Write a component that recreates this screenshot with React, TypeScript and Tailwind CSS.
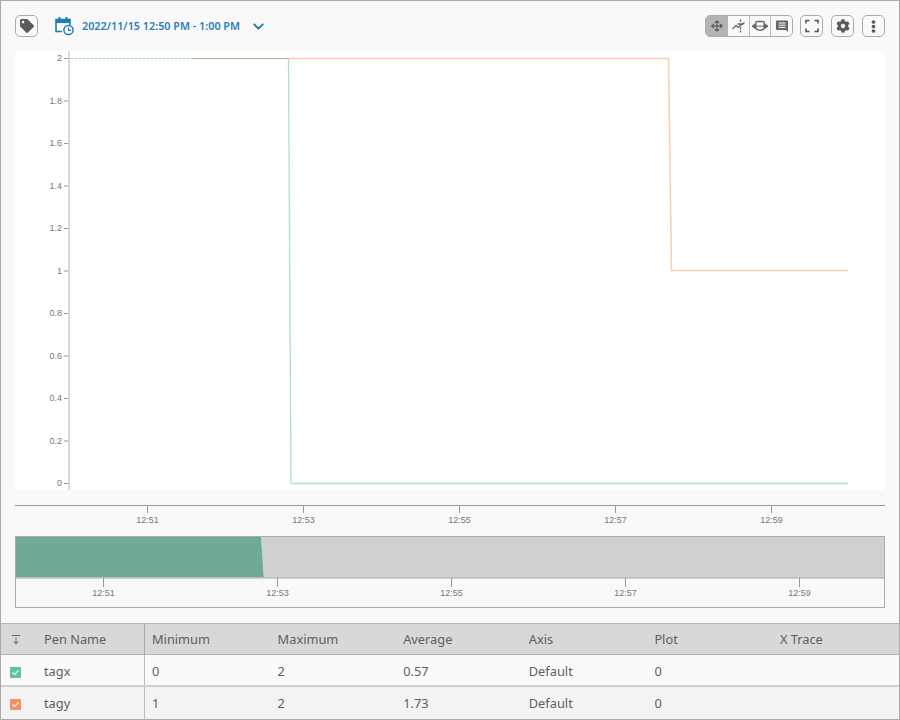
import { ChevronDown } from 'lucide-react'
import { FaArrowsAlt, FaCog, FaEllipsisV, FaTag } from 'react-icons/fa'

const yTicks = [2, 1.8, 1.6, 1.4, 1.2, 1, 0.8, 0.6, 0.4, 0.2, 0]
const columns = ['Minimum', 'Maximum', 'Average', 'Axis', 'Plot', 'X Trace']

const rows = [
  {
    name: 'tagx',
    color: 'bg-[#5fc2a0]',
    row: 'h-[32px] bg-[#fafafa] border-b-2 border-[#d0d0d0]',
    cell: 'pt-1',
    values: ['0', '2', '0.57', 'Default', '0', ''],
  },
  {
    name: 'tagy',
    color: 'bg-[#fb8d63]',
    row: 'h-[33px] bg-[#f3f3f3] border-b border-[#aaa]',
    cell: 'pt-0.5',
    values: ['1', '2', '1.73', 'Default', '0', ''],
  },
]

function MainChart() {
  return (
    <svg width="870" height="439" className="block">
      {yTicks.map((t, i) => {
        const y = 7.5 + i * 42.5
        return (
          <g key={t}>
            <line x1="49" x2="54" y1={y} y2={y} stroke="#999" />
            <text x="47" y={y + 2.8} textAnchor="end" fontSize="9" fill="#777" fontFamily="Liberation Sans, sans-serif">
              {t}
            </text>
          </g>
        )
      })}
      <line x1="54" x2="54" y1="0" y2="439" stroke="#ccc" strokeWidth="1.5" />
      <path d="M55 7.5H273" fill="none" stroke="#5fc2a0" strokeOpacity="0.6" strokeWidth="1" strokeDasharray="3 1" />
      <path d="M273.5 7.5L276 432.5H833" fill="none" stroke="#5fc2a0" strokeOpacity="0.5" strokeWidth="1.3" />
      <path d="M273 7.5H653.5L656.5 219.5H833" fill="none" stroke="#fb8d63" strokeOpacity="0.45" strokeWidth="1.5" />
      <path d="M177 7.5H273" fill="none" stroke="#c98a58" strokeOpacity="0.65" strokeWidth="1.2" />
    </svg>
  )
}

function TimeAxis() {
  return (
    <svg width="870" height="24" className="block">
      <line x1="0" x2="870" y1="0.5" y2="0.5" stroke="#999" />
      {['12:51', '12:53', '12:55', '12:57', '12:59'].map((t, i) => {
        const x = 132.5 + i * 156
        return (
          <g key={t}>
            <line x1={x} x2={x} y1="0" y2="8" stroke="#999" />
            <text x={x} y="18" textAnchor="middle" fontSize="9" fill="#777" fontFamily="Liberation Sans, sans-serif">
              {t}
            </text>
          </g>
        )
      })}
    </svg>
  )
}

function Navigator() {
  return (
    <div className="h-[72px] border border-[#aaa]">
      <svg width="868" height="70" className="block">
        <rect width="868" height="41" fill="#d0d0d0" />
        <polygon points="0,0 245,0 247.5,40 0,40" fill="#6faa96" />
        <line x1="0" x2="868" y1="41" y2="41" stroke="#aaa" />
        {['12:51', '12:53', '12:55', '12:57', '12:59'].map((t, i) => {
          const x = 87.5 + i * 174
          return (
            <g key={t}>
              <line x1={x} x2={x} y1="41" y2="50" stroke="#999" />
              <text x={x} y="59" textAnchor="middle" fontSize="9" fill="#777" fontFamily="Liberation Sans, sans-serif">
                {t}
              </text>
            </g>
          )
        })}
      </svg>
    </div>
  )
}

function CalendarClock() {
  return (
    <svg width="19" height="20" viewBox="0 0 19 20" className="text-[#1b7eb5]">
      <path d="M7 15.5H1V3.5h14v5.5" fill="none" stroke="currentColor" strokeWidth="1.6" />
      <rect x="1" y="3" width="14" height="4" fill="currentColor" />
      <rect x="3.5" y="1" width="2" height="3.5" fill="currentColor" />
      <rect x="10.5" y="1" width="2" height="3.5" fill="currentColor" />
      <circle cx="13.5" cy="14" r="4.6" fill="#f9f9f9" stroke="currentColor" strokeWidth="1.5" />
      <path d="M13.5 11.5V14.3H16" fill="none" stroke="currentColor" strokeWidth="1.2" />
    </svg>
  )
}

export default function App() {
  return (
    <div className="w-[900px] h-[720px] overflow-hidden border border-[#aaa] border-b-0 bg-[#f9f9f9] font-['Noto_Sans',sans-serif]">
      <div className="h-[50px] px-[14px] pt-[14px] flex items-start">
        <button className="w-[23px] h-[22px] rounded-[5px] border border-[#aaa] flex items-center justify-center text-[#5a5a5a]">
          <FaTag size={14} />
        </button>
        <div className="ml-[17px] flex items-center h-[22px]">
          <CalendarClock />
          <span className="ml-[8px] text-[10.8px] font-semibold text-[#2a80b5]">2022/11/15 12:50 PM - 1:00 PM</span>
          <ChevronDown size={17} strokeWidth={2.5} className="ml-[10px] text-[#1b75ab]" />
        </div>
        <div className="ml-auto flex items-center gap-2">
          <div className="h-[22px] -mr-px flex rounded-[5px] border border-[#aaa] overflow-hidden text-[#666]">
            <div className="w-[22px] bg-[#b3b3b3] flex items-center justify-center">
              <FaArrowsAlt size={12} />
            </div>
            <div className="w-[22px] border-r border-[#bbb] flex items-center justify-center">
              <svg width="16" height="16" viewBox="0 0 16 16">
                <path d="M1.5 11L5 7.5 7 9.5 13.5 4.5" fill="none" stroke="#666" strokeWidth="1.3" />
                <path d="M9.5 1.5V14.5M6.5 6H12.5" fill="none" stroke="#666" strokeWidth="1.3" strokeDasharray="2.5 1.2" />
              </svg>
            </div>
            <div className="w-[21px] border-r border-[#bbb] flex items-center justify-center">
              <svg width="18" height="18" viewBox="0 0 18 18">
                <path d="M4.5 7V6.5A2 2 0 0 1 6.5 4.5H11.5A2 2 0 0 1 13.5 6.5V7M5 11.5A5 4.5 0 0 0 13 11.5" fill="none" stroke="#666" strokeWidth="1.3" />
                <path d="M1 9.2H17M1 9.2L5 6.5V12ZM17 9.2L13 6.5V12Z" fill="#666" stroke="#666" strokeWidth="1" />
              </svg>
            </div>
            <div className="w-[21px] flex items-center justify-center">
              <svg width="14" height="14" viewBox="0 0 14 14">
                <path d="M1 2.5A1 1 0 0 1 2 1.5H12A1 1 0 0 1 13 2.5V12.8L10.5 11H2A1 1 0 0 1 1 10Z" fill="#666" />
                <path d="M3.5 4H10.5M3.5 6.2H10.5M3.5 8.4H10.5" stroke="#fff" strokeWidth="1" />
              </svg>
            </div>
          </div>
          <button className="w-[23px] h-[22px] rounded-[5px] border border-[#aaa] flex items-center justify-center">
            <svg width="14" height="14" viewBox="0 0 14 14">
              <path d="M1 4.5V1.5H4.5M9.5 1.5H13V4.5M13 9.5V12.5H9.5M4.5 12.5H1V9.5" fill="none" stroke="#555" strokeWidth="1.6" />
            </svg>
          </button>
          <button className="w-[23px] h-[22px] rounded-[5px] border border-[#aaa] flex items-center justify-center text-[#5a5a5a]">
            <FaCog size={14} />
          </button>
          <button className="w-[23px] h-[22px] rounded-[5px] border border-[#aaa] flex items-center justify-center text-[#5a5a5a]">
            <FaEllipsisV size={13} />
          </button>
        </div>
      </div>

      <div className="mx-[14px] bg-white">
        <MainChart />
      </div>
      <div className="mx-[14px] mt-[15px]">
        <TimeAxis />
      </div>
      <div className="mx-[14px] mt-[7px]">
        <Navigator />
      </div>

      <div className="mt-[15px] text-[12.8px] text-[#5f5f5f]">
        <div className="h-[32px] flex items-center bg-[#d8d8d8] border-y border-[#b4b4b4]">
          <div className="w-[144px] h-full pt-px flex items-center border-r border-[#aaa]">
            <svg width="10" height="11" viewBox="0 0 10 11" className="ml-[10px]">
              <path d="M1 1.5H9M5 3.5V10M2.5 7.5L5 10L7.5 7.5" fill="none" stroke="#666" strokeWidth="1" />
            </svg>
            <span className="ml-[23px]">Pen Name</span>
          </div>
          {columns.map((c) => (
            <div key={c} className="w-[125.6px] pl-[7px] pt-px">{c}</div>
          ))}
        </div>
        {rows.map((r) => (
          <div key={r.name} className={`flex items-center ${r.row}`}>
            <div className={`w-[144px] h-full flex items-center border-r border-[#bbb] ${r.cell}`}>
              <span className={`ml-[9px] w-[11px] h-[11px] rounded-[1px] flex items-center justify-center ${r.color}`}>
                <svg width="9" height="9" viewBox="0 0 9 9">
                  <path d="M1.5 4.5L3.7 6.5L7.5 2.5" fill="none" stroke="#fff" strokeWidth="1.2" />
                </svg>
              </span>
              <span className="ml-[23px]">{r.name}</span>
            </div>
            {r.values.map((v, i) => (
              <div key={i} className={`w-[125.6px] pl-[7px] ${r.cell}`}>{v}</div>
            ))}
          </div>
        ))}
      </div>
    </div>
  )
}
